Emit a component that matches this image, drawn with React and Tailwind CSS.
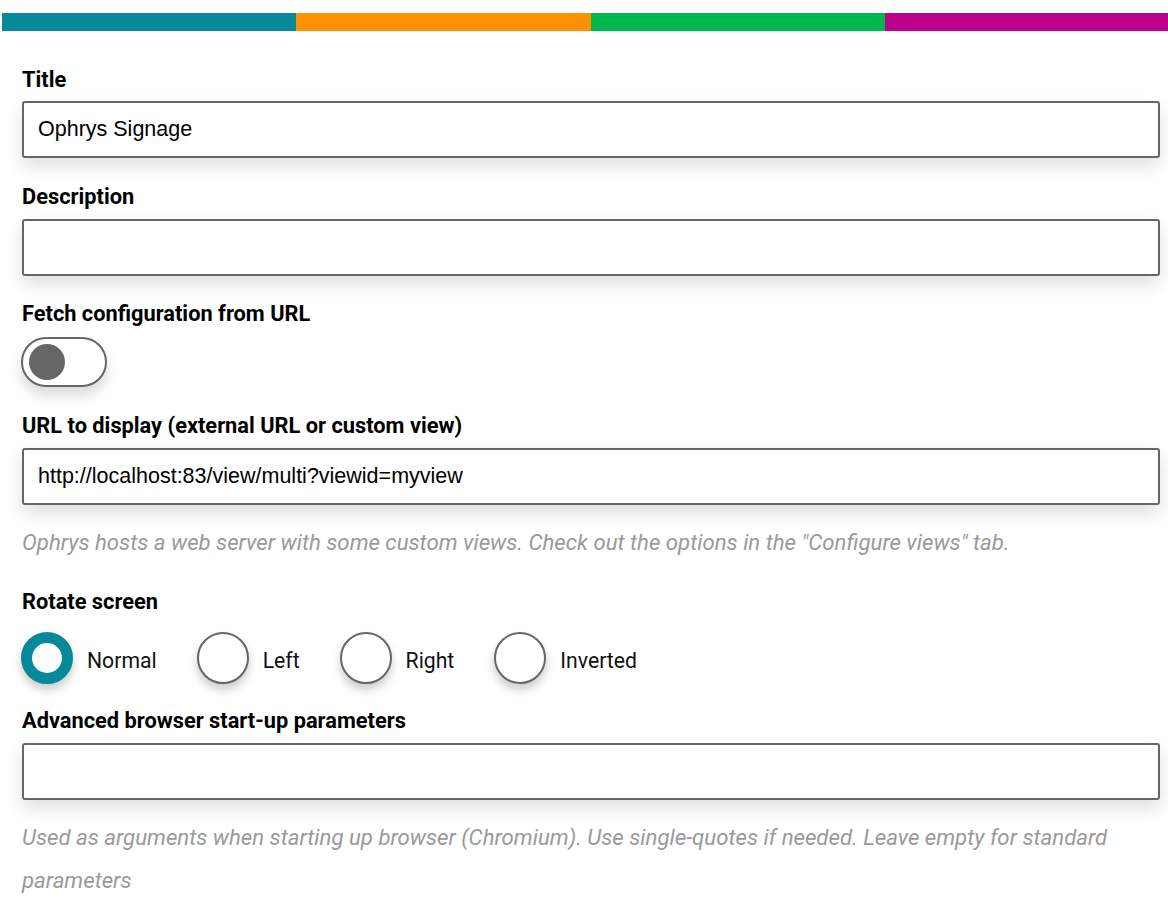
import React from "react";

const labelCls = "block h-6 leading-6 text-[21.8px] font-bold text-black font-['Roboto',sans-serif]";
const inputCls =
  "block w-[1138px] h-[57px] border-2 border-[#666666] rounded-[3px] bg-white px-[14px] text-[21.5px] text-black font-['Liberation_Sans',Arial,sans-serif] shadow-[0_8px_18px_rgba(0,0,0,0.13)] outline-none";
const helpCls = "text-[22.2px] leading-[43px] italic text-[#9a9a9a] font-['Roboto',sans-serif]";

function Radio({ label, checked, last }) {
  return (
    <div className={"flex items-center " + (last ? "" : "mr-[40px]")}>
      {checked ? (
        <div className="w-[52px] h-[52px] rounded-full border-[11px] border-[#06899a] bg-white shadow-[0_6px_10px_rgba(0,0,0,0.2)]" />
      ) : (
        <div className="w-[52px] h-[52px] rounded-full border-2 border-[#666666] bg-white shadow-[0_6px_10px_rgba(0,0,0,0.2)]" />
      )}
      <span className="ml-[14px] mt-[6px] text-[21.2px] text-[#111] font-['Roboto',sans-serif]">{label}</span>
    </div>
  );
}

export default function App() {
  return (
    <div className="w-[1168px] h-[898px] overflow-hidden bg-white">
      <div className="mt-[13px] ml-[2px] flex h-[18px]">
        <div className="w-[294px] bg-[#05899b]" />
        <div className="w-[295px] bg-[#ff9000]" />
        <div className="w-[294px] bg-[#00b84c]" />
        <div className="flex-1 bg-[#b9018e]" />
      </div>
      <div className="pl-[22px] pt-[37px]">
        <label className={labelCls}>Title</label>
        <input className={inputCls + " mt-[9px]"} defaultValue="Ophrys Signage" />

        <label className={labelCls + " mt-[27px]"}>Description</label>
        <input className={inputCls + " mt-[10px]"} defaultValue="" />

        <label className={labelCls + " mt-[26px]"}>Fetch configuration from URL</label>
        <div className="mt-[11px] -ml-px w-[86px] h-[50px] rounded-full border-2 border-[#666666] bg-white flex items-center pl-[6px] shadow-[0_8px_14px_rgba(0,0,0,0.15)]">
          <div className="w-[36px] h-[36px] rounded-full bg-[#666666]" />
        </div>

        <label className={labelCls + " mt-[27px]"}>URL to display (external URL or custom view)</label>
        <input className={inputCls + " mt-[10px]"} defaultValue="http://localhost:83/view/multi?viewid=myview" />
        <p className={helpCls + " mt-[16px]"}>
          Ophrys hosts a web server with some custom views. Check out the options in the "Configure views" tab.
        </p>

        <label className={labelCls + " mt-[26px]"}>Rotate screen</label>
        <div className="mt-[18px] -ml-px flex items-center">
          <Radio label="Normal" checked />
          <Radio label="Left" />
          <Radio label="Right" />
          <Radio label="Inverted" last />
        </div>

        <label className={labelCls + " mt-[25px]"}>Advanced browser start-up parameters</label>
        <input className={inputCls + " mt-[10px]"} defaultValue="" />
        <p className={helpCls + " mt-[16px] w-[1138px]"}>
          Used as arguments when starting up browser (Chromium). Use single-quotes if needed. Leave empty for standard parameters
        </p>
      </div>
    </div>
  );
}
